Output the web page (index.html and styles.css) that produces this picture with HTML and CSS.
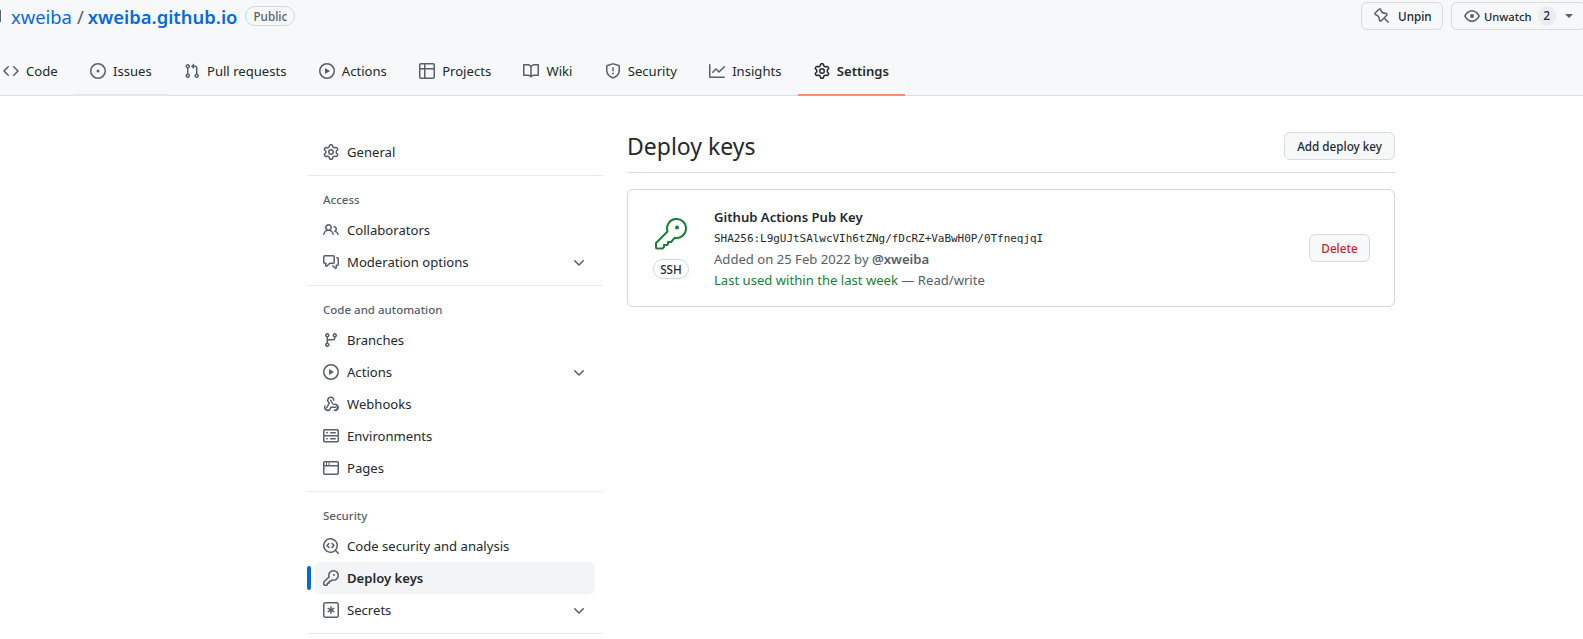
FILE: index.html
```html
<!DOCTYPE html>
<html lang="en">
<head>
<meta charset="utf-8">
<title>Deploy keys</title>
<link rel="stylesheet" href="styles.css">
</head>
<body>
<svg class="sprite" aria-hidden="true">
<symbol id="i-code" viewBox="0 0 16 16"><path d="M4.72 3.22a.75.75 0 011.06 1.06L2.06 8l3.72 3.72a.75.75 0 11-1.06 1.06L.47 8.53a.75.75 0 010-1.06l4.25-4.25zm6.56 0a.75.75 0 10-1.06 1.06L13.94 8l-3.72 3.72a.75.75 0 101.06 1.06l4.25-4.25a.75.75 0 000-1.06l-4.25-4.25z"/></symbol>
<symbol id="i-issue" viewBox="0 0 16 16"><path d="M8 9.5a1.5 1.5 0 100-3 1.5 1.5 0 000 3z"/><path fill-rule="evenodd" d="M8 0a8 8 0 100 16A8 8 0 008 0zM1.5 8a6.5 6.5 0 1113 0 6.5 6.5 0 01-13 0z"/></symbol>
<symbol id="i-pr" viewBox="0 0 16 16"><path fill-rule="evenodd" d="M7.177 3.073L9.573.677A.25.25 0 0110 .854v4.792a.25.25 0 01-.427.177L7.177 3.427a.25.25 0 010-.354zM3.75 2.5a.75.75 0 100 1.5.75.75 0 000-1.5zm-2.25.75a2.25 2.25 0 113 2.122v5.256a2.251 2.251 0 11-1.5 0V5.372A2.25 2.25 0 011.5 3.25zM11 2.5h-1V4h1a1 1 0 011 1v5.628a2.251 2.251 0 101.5 0V5A2.5 2.5 0 0011 2.5zm1 10.25a.75.75 0 111.5 0 .75.75 0 01-1.5 0zM3.75 12a.75.75 0 100 1.5.75.75 0 000-1.5z"/></symbol>
<symbol id="i-play" viewBox="0 0 16 16"><path fill-rule="evenodd" d="M1.5 8a6.5 6.5 0 1113 0 6.5 6.5 0 01-13 0zM8 0a8 8 0 100 16A8 8 0 008 0zM6.379 5.227A.25.25 0 006 5.442v5.117a.25.25 0 00.379.214l4.264-2.559a.25.25 0 000-.428L6.379 5.227z"/></symbol>
<symbol id="i-table" viewBox="0 0 16 16"><path fill-rule="evenodd" d="M0 1.75C0 .784.784 0 1.75 0h12.5C15.216 0 16 .784 16 1.75v12.5A1.75 1.75 0 0114.25 16H1.75A1.75 1.75 0 010 14.25V1.75zM1.5 6.5v7.75c0 .138.112.25.25.25H5v-8H1.5zM5 5H1.5V1.75a.25.25 0 01.25-.25H5V5zm1.5 1.5v8h7.75a.25.25 0 00.25-.25V6.5h-8zm8-1.5h-8V1.5h7.75a.25.25 0 01.25.25V5z"/></symbol>
<symbol id="i-book" viewBox="0 0 16 16"><path fill-rule="evenodd" d="M0 1.75A.75.75 0 01.75 1h4.253c1.227 0 2.317.59 3 1.501A3.744 3.744 0 0111.006 1h4.245a.75.75 0 01.75.75v10.5a.75.75 0 01-.75.75h-4.507a2.25 2.25 0 00-1.591.659l-.622.621a.75.75 0 01-1.06 0l-.622-.621A2.25 2.25 0 005.258 13H.75a.75.75 0 01-.75-.75V1.75zm8.755 3a2.25 2.25 0 012.25-2.25H14.5v9h-3.757c-.71 0-1.4.201-1.992.572l.004-7.322zm-1.504 7.324l.004-5.073-.002-2.253A2.25 2.25 0 005.003 2.5H1.5v9h3.757a3.75 3.75 0 011.994.574z"/></symbol>
<symbol id="i-shield" viewBox="0 0 16 16"><path fill-rule="evenodd" d="M7.467.133a1.75 1.75 0 011.066 0l5.25 1.68A1.75 1.75 0 0115 3.48V7c0 1.566-.32 3.182-1.303 4.682-.983 1.498-2.585 2.813-5.032 3.855a1.7 1.7 0 01-1.33 0c-2.447-1.042-4.049-2.357-5.032-3.855C1.32 10.182 1 8.566 1 7V3.48a1.75 1.75 0 011.217-1.667l5.25-1.68zm.61 1.429a.25.25 0 00-.153 0l-5.25 1.68a.25.25 0 00-.174.238V7c0 1.358.275 2.666 1.057 3.86.784 1.194 2.121 2.34 4.366 3.297a.2.2 0 00.154 0c2.245-.956 3.582-2.104 4.366-3.298C13.225 9.666 13.5 8.36 13.5 7V3.48a.25.25 0 00-.174-.237l-5.25-1.68zM9 10.5a1 1 0 11-2 0 1 1 0 012 0zm-.25-5.75a.75.75 0 10-1.5 0v3a.75.75 0 001.5 0v-3z"/></symbol>
<symbol id="i-graph" viewBox="0 0 16 16"><path fill-rule="evenodd" d="M1.5 1.75a.75.75 0 00-1.5 0v12.5c0 .414.336.75.75.75h14.5a.75.75 0 000-1.5H1.5V1.75zm14.28 2.53a.75.75 0 00-1.06-1.06L10 7.94 7.53 5.47a.75.75 0 00-1.06 0L3.22 8.72a.75.75 0 001.06 1.06L7 7.06l2.47 2.47a.75.75 0 001.06 0l5.25-5.25z"/></symbol>
<symbol id="i-gear" viewBox="0 0 16 16"><path fill-rule="evenodd" d="M7.429 1.525a6.593 6.593 0 011.142 0c.036.003.108.036.137.146l.289 1.105c.147.56.55.967.997 1.189.174.086.341.183.501.29.417.278.97.423 1.53.27l1.102-.303c.11-.03.175.016.195.046.219.31.41.641.573.989.014.031.022.11-.059.19l-.815.806c-.411.406-.562.957-.53 1.456a4.588 4.588 0 010 .582c-.032.499.119 1.05.53 1.456l.815.806c.08.08.073.159.059.19a6.494 6.494 0 01-.573.99c-.02.029-.086.074-.195.045l-1.103-.303c-.559-.153-1.112-.008-1.529.27-.16.107-.327.204-.5.29-.449.222-.851.628-.998 1.189l-.289 1.105c-.029.11-.101.143-.137.146a6.613 6.613 0 01-1.142 0c-.036-.003-.108-.037-.137-.146l-.289-1.105c-.147-.56-.55-.967-.997-1.189a4.502 4.502 0 01-.501-.29c-.417-.278-.97-.423-1.53-.27l-1.102.303c-.11.03-.175-.016-.195-.046a6.492 6.492 0 01-.573-.989c-.014-.031-.022-.11.059-.19l.815-.806c.411-.406.562-.957.53-1.456a4.587 4.587 0 010-.582c.032-.499-.119-1.05-.53-1.456l-.815-.806c-.08-.08-.073-.159-.059-.19a6.44 6.44 0 01.573-.99c.02-.029.086-.075.195-.045l1.103.303c.559.153 1.112.008 1.529-.27.16-.107.327-.204.5-.29.449-.222.851-.628.998-1.189l.289-1.105c.029-.11.101-.143.137-.146zM8 0c-.236 0-.47.01-.701.03-.743.065-1.29.615-1.458 1.261l-.29 1.106c-.017.066-.078.158-.211.224a5.994 5.994 0 00-.668.386c-.123.082-.233.09-.3.071L3.27 2.776c-.644-.177-1.392.02-1.82.63a7.977 7.977 0 00-.704 1.217c-.315.675-.111 1.422.363 1.891l.815.806c.05.048.098.147.088.294a6.084 6.084 0 000 .772c.01.147-.038.246-.088.294l-.815.806c-.474.469-.678 1.216-.363 1.891.2.428.436.835.704 1.218.428.609 1.176.806 1.82.63l1.103-.303c.066-.019.176-.011.299.071.213.143.436.272.668.386.133.066.194.158.212.224l.289 1.106c.169.646.715 1.196 1.458 1.26a8.094 8.094 0 001.402 0c.743-.064 1.29-.614 1.458-1.26l.29-1.106c.017-.066.078-.158.211-.224a5.98 5.98 0 00.668-.386c.123-.082.233-.09.3-.071l1.102.302c.644.177 1.392-.02 1.82-.63.268-.382.505-.789.704-1.217.315-.675.111-1.422-.364-1.891l-.814-.806c-.05-.048-.098-.147-.088-.294a6.1 6.1 0 000-.772c-.01-.147.039-.246.088-.294l.814-.806c.475-.469.679-1.216.364-1.891a7.992 7.992 0 00-.704-1.218c-.428-.609-1.176-.806-1.82-.63l-1.103.303c-.066.019-.176.011-.299-.071a5.991 5.991 0 00-.668-.386c-.133-.066-.194-.158-.212-.224L10.16 1.29C9.99.645 9.444.095 8.701.031A8.094 8.094 0 008 0zm1.5 8a1.5 1.5 0 11-3 0 1.5 1.5 0 013 0zM11 8a3 3 0 11-6 0 3 3 0 016 0z"/></symbol>
<symbol id="i-pin" viewBox="0 0 16 16"><path fill-rule="evenodd" d="M4.456.734a1.75 1.75 0 012.826.504l.613 1.327a3.081 3.081 0 002.084 1.707l2.454.584c1.332.317 1.8 1.972.832 2.94L11.06 10l3.72 3.72a.75.75 0 11-1.061 1.06L10 11.06l-2.204 2.205c-.968.968-2.623.5-2.94-.832l-.584-2.454a3.081 3.081 0 00-1.707-2.084l-1.327-.613a1.75 1.75 0 01-.504-2.826L4.456.734zM5.92 1.866a.25.25 0 00-.404-.072L1.794 5.516a.25.25 0 00.072.404l1.328.613A4.582 4.582 0 015.73 9.63l.584 2.454a.25.25 0 00.42.12l5.47-5.47a.25.25 0 00-.12-.42L9.63 6.03a4.581 4.581 0 01-3.098-2.537L5.92 1.866z"/></symbol>
<symbol id="i-eye" viewBox="0 0 16 16"><path fill-rule="evenodd" d="M1.679 7.932c.412-.621 1.242-1.75 2.366-2.717C5.175 4.242 6.527 3.5 8 3.5c1.473 0 2.824.742 3.955 1.715 1.124.967 1.954 2.096 2.366 2.717a.119.119 0 010 .136c-.412.621-1.242 1.75-2.366 2.717C10.825 11.758 9.473 12.5 8 12.5c-1.473 0-2.824-.742-3.955-1.715C2.92 9.818 2.09 8.69 1.679 8.068a.119.119 0 010-.136zM8 2c-1.981 0-3.67.992-4.933 2.078C1.797 5.169.88 6.423.43 7.1a1.619 1.619 0 000 1.798c.45.678 1.367 1.932 2.637 3.024C4.329 13.008 6.019 14 8 14c1.981 0 3.67-.992 4.933-2.078 1.27-1.091 2.187-2.345 2.637-3.023a1.619 1.619 0 000-1.798c-.45-.678-1.367-1.932-2.637-3.023C11.671 2.992 9.981 2 8 2zm0 8a2 2 0 100-4 2 2 0 000 4z"/></symbol>
<symbol id="i-people" viewBox="0 0 16 16"><path fill-rule="evenodd" d="M5.5 3.5a2 2 0 100 4 2 2 0 000-4zM2 5.5a3.5 3.5 0 115.898 2.549 5.507 5.507 0 013.034 4.084.75.75 0 11-1.482.235 4.001 4.001 0 00-7.9 0 .75.75 0 01-1.482-.236A5.507 5.507 0 013.102 8.05 3.49 3.49 0 012 5.5zM11 4a.75.75 0 100 1.5 1.5 1.5 0 01.666 2.844.75.75 0 00-.416.672v.352a.75.75 0 00.574.73c1.2.289 2.162 1.2 2.522 2.372a.75.75 0 101.434-.44 5.01 5.01 0 00-2.56-3.012A3 3 0 0011 4z"/></symbol>
<symbol id="i-comments" viewBox="0 0 16 16"><path fill-rule="evenodd" d="M1.5 2.75a.25.25 0 01.25-.25h8.5a.25.25 0 01.25.25v5.5a.25.25 0 01-.25.25h-3.5a.75.75 0 00-.53.22L3.5 11.44V9.25a.75.75 0 00-.75-.75h-1a.25.25 0 01-.25-.25v-5.5zM1.75 1A1.75 1.75 0 000 2.75v5.5C0 9.216.784 10 1.75 10H2v1.543a1.457 1.457 0 002.487 1.03L7.061 10h3.189A1.75 1.75 0 0012 8.25v-5.5A1.75 1.75 0 0010.25 1h-8.5zM14.5 4.75a.25.25 0 00-.25-.25h-.5a.75.75 0 110-1.5h.5c.966 0 1.75.784 1.75 1.75v5.5A1.75 1.75 0 0114.25 12H14v1.543a1.457 1.457 0 01-2.487 1.03L9.22 12.28a.75.75 0 111.06-1.06l2.22 2.22v-2.19a.75.75 0 01.75-.75h1a.25.25 0 00.25-.25v-5.5z"/></symbol>
<symbol id="i-branch" viewBox="0 0 16 16"><path fill-rule="evenodd" d="M11.75 2.5a.75.75 0 100 1.5.75.75 0 000-1.5zm-2.25.75a2.25 2.25 0 113 2.122V6A2.5 2.5 0 0110 8.5H6a1 1 0 00-1 1v1.128a2.251 2.251 0 11-1.5 0V5.372a2.25 2.25 0 111.5 0v1.836A2.492 2.492 0 016 7h4a1 1 0 001-1v-.628A2.25 2.25 0 019.5 3.25zM4.25 12a.75.75 0 100 1.5.75.75 0 000-1.5zM3.5 3.25a.75.75 0 111.5 0 .75.75 0 01-1.5 0z"/></symbol>
<symbol id="i-webhook" viewBox="0 0 16 16"><path d="M5.5 4.25a2.25 2.25 0 014.5 0 .75.75 0 001.5 0 3.75 3.75 0 10-6.14 2.889l-2.272 4.258a.75.75 0 001.324.706L7 7.25a.75.75 0 00-.309-1.015A2.25 2.25 0 015.5 4.25z"/><path d="M7.364 3.607a.75.75 0 011.022.282l2.28 4.072a3.75 3.75 0 11.635 7.042.75.75 0 11.132-1.494 2.25 2.25 0 10-.7-4.38.75.75 0 01-.923-.336L7.081 4.63a.75.75 0 01.283-1.022z"/><path d="M2.09 9.267a.75.75 0 01.67.82 2.25 2.25 0 104.24 1.163.75.75 0 01.75-.75h4.82a.75.75 0 010 1.5H8.4A3.751 3.751 0 111.27 9.94a.75.75 0 01.82-.67z"/></symbol>
<symbol id="i-server" viewBox="0 0 16 16"><path fill-rule="evenodd" d="M1.75 1A1.75 1.75 0 000 2.75v4c0 .372.116.717.314 1a1.742 1.742 0 00-.314 1v4c0 .966.784 1.75 1.75 1.75h12.5A1.75 1.75 0 0016 12.75v-4c0-.372-.116-.717-.314-1 .198-.283.314-.628.314-1v-4A1.75 1.75 0 0014.25 1H1.75zm0 7.5a.25.25 0 00-.25.25v4c0 .138.112.25.25.25h12.5a.25.25 0 00.25-.25v-4a.25.25 0 00-.25-.25H1.75zM1.5 2.75a.25.25 0 01.25-.25h12.5a.25.25 0 01.25.25v4a.25.25 0 01-.25.25H1.75a.25.25 0 01-.25-.25v-4zm5.5 2A.75.75 0 017.75 4h4.5a.75.75 0 010 1.5h-4.5A.75.75 0 017 4.75zM7.75 10a.75.75 0 000 1.5h4.5a.75.75 0 000-1.5h-4.5zM3 4.75A.75.75 0 013.75 4h.5a.75.75 0 010 1.5h-.5A.75.75 0 013 4.75zM3.75 10a.75.75 0 000 1.5h.5a.75.75 0 000-1.5h-.5z"/></symbol>
<symbol id="i-browser" viewBox="0 0 16 16"><path fill-rule="evenodd" d="M0 2.75C0 1.784.784 1 1.75 1h12.5c.966 0 1.75.784 1.75 1.75v10.5A1.75 1.75 0 0114.25 15H1.75A1.75 1.75 0 010 13.25V2.75zm1.75-.25a.25.25 0 00-.25.25V5h13V2.75a.25.25 0 00-.25-.25H1.75zM14.5 6.5h-13v6.75c0 .138.112.25.25.25h12.5a.25.25 0 00.25-.25V6.5z"/><path d="M3 2.5h1V5H3zM5.5 2.5h1V5h-1z"/></symbol>
<symbol id="i-codescan" viewBox="0 0 16 16"><path d="M8.47 4.97a.75.75 0 000 1.06L9.94 7.5 8.47 8.97a.75.75 0 101.06 1.06l2-2a.75.75 0 000-1.06l-2-2a.75.75 0 00-1.06 0zM6.53 6.03a.75.75 0 00-1.06-1.06l-2 2a.75.75 0 000 1.06l2 2a.75.75 0 101.06-1.06L5.06 7.5l1.47-1.47z"/><path fill-rule="evenodd" d="M12.246 13.307a7.5 7.5 0 111.06-1.06l2.474 2.473a.75.75 0 11-1.06 1.06l-2.474-2.473zM1.5 7.5a6 6 0 1110.386 4.094.75.75 0 00-.292.293A6 6 0 011.5 7.5z"/></symbol>
<symbol id="i-key" viewBox="0 0 16 16"><path fill-rule="evenodd" d="M6.5 5.5a4 4 0 112.731 3.795.75.75 0 00-.768.18L7.44 10.5H6.25a.75.75 0 00-.75.75v1.19l-.06.06H4.25a.75.75 0 00-.75.75v1.19l-.06.06H1.75a.25.25 0 01-.25-.25v-1.69l5.024-5.024a.75.75 0 00.181-.768A3.995 3.995 0 016.5 5.5zm4-5.5a5.5 5.5 0 00-5.348 6.788L.22 11.72a.75.75 0 00-.22.53v2C0 15.216.784 16 1.75 16h2a.75.75 0 00.53-.22l.5-.5a.75.75 0 00.22-.53V14h.75a.75.75 0 00.53-.22l.5-.5a.75.75 0 00.22-.53V12h.75a.75.75 0 00.53-.22l.932-.932A5.5 5.5 0 1010.5 0zm.5 6a1 1 0 100-2 1 1 0 000 2z"/></symbol>
<symbol id="i-secret" viewBox="0 0 16 16"><path fill-rule="evenodd" d="M0 2.75A2.75 2.75 0 012.75 0h10.5A2.75 2.75 0 0116 2.75v10.5A2.75 2.75 0 0113.25 16H2.75A2.75 2.75 0 010 13.25V2.75zM2.75 1.5c-.69 0-1.25.56-1.25 1.25v10.5c0 .69.56 1.25 1.25 1.25h10.5c.69 0 1.25-.56 1.25-1.25V2.75c0-.69-.56-1.25-1.25-1.25H2.75z"/><path d="M8 4a.75.75 0 01.75.75V6.7l1.69-.975a.75.75 0 01.75 1.3L9.5 8l1.69.976a.75.75 0 01-.75 1.298L8.75 9.3v1.951a.75.75 0 01-1.5 0V9.299l-1.69.976a.75.75 0 01-.75-1.3L6.5 8l-1.69-.975a.75.75 0 01.75-1.3l1.69.976V4.75A.75.75 0 018 4z"/></symbol>
<symbol id="i-chevron" viewBox="0 0 16 16"><path fill-rule="evenodd" d="M12.78 6.22a.75.75 0 010 1.06l-4.25 4.25a.75.75 0 01-1.06 0L3.22 7.28a.75.75 0 011.06-1.06L8 9.94l3.72-3.72a.75.75 0 011.06 0z"/></symbol>
</svg>

<header class="repo-head">
  <div class="repo-top">
    <div class="repo-title">
      <span class="repo-edge"></span>
      <a class="owner">xweiba</a>
      <span class="slash">/</span>
      <a class="repo-name">xweiba.github.io</a>
      <span class="label">Public</span>
    </div>
    <div class="repo-actions">
      <button class="btn btn-pin"><svg class="ico"><use href="#i-pin"/></svg>Unpin</button>
      <button class="btn btn-watch"><svg class="ico"><use href="#i-eye"/></svg>Unwatch<span class="counter">2</span><span class="caret"></span></button>
    </div>
  </div>
  <nav class="tabs">
    <a class="tab"><svg class="ico"><use href="#i-code"/></svg>Code</a>
    <a class="tab tab-hover"><svg class="ico"><use href="#i-issue"/></svg>Issues</a>
    <a class="tab"><svg class="ico"><use href="#i-pr"/></svg>Pull requests</a>
    <a class="tab"><svg class="ico"><use href="#i-play"/></svg>Actions</a>
    <a class="tab"><svg class="ico"><use href="#i-table"/></svg>Projects</a>
    <a class="tab"><svg class="ico"><use href="#i-book"/></svg>Wiki</a>
    <a class="tab"><svg class="ico"><use href="#i-shield"/></svg>Security</a>
    <a class="tab"><svg class="ico"><use href="#i-graph"/></svg>Insights</a>
    <a class="tab tab-active"><svg class="ico"><use href="#i-gear"/></svg>Settings</a>
  </nav>
</header>

<div class="layout">
  <aside class="side">
    <a class="item"><svg class="ico"><use href="#i-gear"/></svg>General</a>
    <hr class="rule">
    <h3 class="group">Access</h3>
    <a class="item"><svg class="ico"><use href="#i-people"/></svg>Collaborators</a>
    <a class="item"><svg class="ico"><use href="#i-comments"/></svg>Moderation options<svg class="ico chev"><use href="#i-chevron"/></svg></a>
    <hr class="rule">
    <h3 class="group">Code and automation</h3>
    <a class="item"><svg class="ico"><use href="#i-branch"/></svg>Branches</a>
    <a class="item"><svg class="ico"><use href="#i-play"/></svg>Actions<svg class="ico chev"><use href="#i-chevron"/></svg></a>
    <a class="item"><svg class="ico"><use href="#i-webhook"/></svg>Webhooks</a>
    <a class="item"><svg class="ico"><use href="#i-server"/></svg>Environments</a>
    <a class="item"><svg class="ico"><use href="#i-browser"/></svg>Pages</a>
    <hr class="rule">
    <h3 class="group">Security</h3>
    <a class="item"><svg class="ico"><use href="#i-codescan"/></svg>Code security and analysis</a>
    <a class="item item-active"><svg class="ico"><use href="#i-key"/></svg>Deploy keys</a>
    <a class="item"><svg class="ico"><use href="#i-secret"/></svg>Secrets<svg class="ico chev"><use href="#i-chevron"/></svg></a>
    <hr class="rule">
  </aside>

  <main class="main">
    <div class="subhead">
      <h2 class="subhead-title">Deploy keys</h2>
      <button class="btn btn-add">Add deploy key</button>
    </div>
    <section class="key-card">
      <div class="key-type">
        <svg class="key-icon" viewBox="0 0 32 32"><path d="M12.5 13.5 1 25v4.500q0 1 1 1h5.500L9 29v-2h3l1-1v-2h3l3.700-4.170A9.500 9.500 0 1 0 12.500 13.500z"/><circle cx="22" cy="9.500" r="2"/></svg>
        <span class="ssh">SSH</span>
      </div>
      <div class="key-info">
        <strong class="key-name">Github Actions Pub Key</strong>
        <code class="key-hash">SHA256:L9gUJtSAlwcVIh6tZNg/fDcRZ+VaBwH0P/0TfneqjqI</code>
        <span class="key-meta">Added on 25 Feb 2022 by <b class="author">@xweiba</b></span>
        <span class="key-meta"><span class="used">Last used within the last week</span> — Read/write</span>
      </div>
      <button class="btn btn-delete">Delete</button>
    </section>
  </main>
</div>
</body>
</html>
```
FILE: styles.css
```css
* { box-sizing: border-box; }
html, body { margin: 0; height: 639px; overflow: hidden; background: #fff; }
body {
  font-family: "Noto Sans", "Liberation Sans", sans-serif;
  font-size: 13.1px;
  color: #24292f;
}
.sprite { display: none; }
.ico { width: 16px; height: 16px; fill: #57606a; flex: none; }

.repo-head {
  height: 96px;
  background: #f6f8fa;
  border-bottom: 1px solid #d8dee4;
  padding-top: 2px;
}
.repo-top { display: flex; justify-content: space-between; height: 46px; }
.repo-title { display: flex; align-items: center; height: 28px; }
.repo-edge { width: 1px; height: 12px; background: #57606a; margin-right: 10px; }
.owner { font-size: 18.4px; color: #0969da; }
.slash { font-size: 18.4px; color: #57606a; margin: 0 4px 0 5px; }
.repo-name { font-size: 18.4px; font-weight: 600; color: #0969da; }
.label {
  margin-left: 8px;
  height: 20px;
  padding: 0 7px;
  border: 1px solid #d0d7de;
  border-radius: 10px;
  font-size: 11.7px;
  font-weight: 500;
  line-height: 18px;
  color: #57606a;
}
.repo-actions { display: flex; gap: 8px; margin-right: -3px; }
.btn {
  display: flex;
  align-items: center;
  height: 28px;
  padding: 0 12px;
  font: 500 11.7px "Noto Sans", "Liberation Sans", sans-serif;
  color: #24292f;
  background: #f6f8fa;
  border: 1px solid #d6dbe1;
  border-radius: 6px;
}
.btn-pin { width: 82px; }
.btn-pin .ico { margin-right: 8px; }
.btn-watch { width: 135px; font-size: 11.2px; }
.btn-watch .ico { margin-right: 4px; }
.counter {
  width: 20px;
  height: 20px;
  margin: 0 9px 0 6px;
  border-radius: 10px;
  background: #eaeef2;
  font-size: 12px;
  text-align: center;
  line-height: 20px;
}
.caret {
  border: 4px solid transparent;
  border-top-color: #57606a;
  border-bottom: 0;
}

.tabs { display: flex; gap: .3px; margin-left: -13px; height: 48px; }
.tab {
  display: flex;
  align-items: center;
  gap: 7px;
  height: 48px;
  padding: 0 16px;
  border-bottom: 2px solid transparent;
}
.tab-hover { border-bottom-color: #e3e7ec; }
.tab-active { font-weight: 600; border-bottom-color: #fd8c73; }
.tab-active .ico { fill: #24292f; }

.layout { display: flex; gap: 24px; margin-left: 307px; width: 1088px; }
.side { width: 296px; flex: none; padding-top: 40px; }
.item {
  display: flex;
  align-items: center;
  gap: 8px;
  height: 32px;
  margin: 0 8px;
  padding-left: 8px;
  border-radius: 6px;
  position: relative;
}
.chev { margin-left: auto; margin-right: 8px; }
.item-active { background: #f3f4f6; font-weight: 600; }
.item-active::before {
  content: "";
  position: absolute;
  left: -8px;
  top: 4px;
  width: 4px;
  height: 24px;
  border-radius: 2px;
  background: #0969da;
}
.rule { height: 1px; margin: 7px 0 8px; border: 0; background: #e8ebef; }
.group {
  margin: 0;
  height: 30px;
  padding: 7px 16px 0;
  font-size: 11.5px;
  font-weight: 500;
  line-height: 18px;
  color: #57606a;
}

.main { width: 768px; padding-top: 36px; }
.subhead {
  display: flex;
  align-items: center;
  justify-content: space-between;
  height: 41px;
  padding-bottom: 13px;
  border-bottom: 1px solid #d8dee4;
}
.subhead-title { margin: 0; font-size: 23px; font-weight: 400; line-height: 30px; }
.key-card {
  display: flex;
  align-items: center;
  height: 118px;
  margin-top: 16px;
  padding: 0 24px;
  border: 1px solid #d0d7de;
  border-radius: 6px;
}
.key-type { display: flex; flex-direction: column; align-items: center; gap: 9px; width: 38px; margin-right: 24px; padding-top: 1px; }
.key-icon { width: 32px; height: 32px; fill: none; stroke: #1a7f37; stroke-width: 2; stroke-linejoin: round; }
.key-icon circle { fill: #1a7f37; stroke: none; }
.ssh {
  height: 20px;
  padding: 0 6px;
  border: 1px solid #d0d7de;
  border-radius: 10px;
  font-size: 11.7px;
  font-weight: 500;
  line-height: 18px;
}
.key-info { display: flex; flex-direction: column; flex: 1; padding-top: 1px; line-height: 21px; }
.key-name { font-weight: 600; }
.key-hash { margin-top: 1px; font: 11px/20px "DejaVu Sans Mono", monospace; letter-spacing: -.04px; }
.key-meta { color: #57606a; }
.author { font-weight: 600; }
.used { color: #1a7f37; }
.btn-delete { color: #cf222e; justify-content: center; width: 61px; padding: 0; }
```
